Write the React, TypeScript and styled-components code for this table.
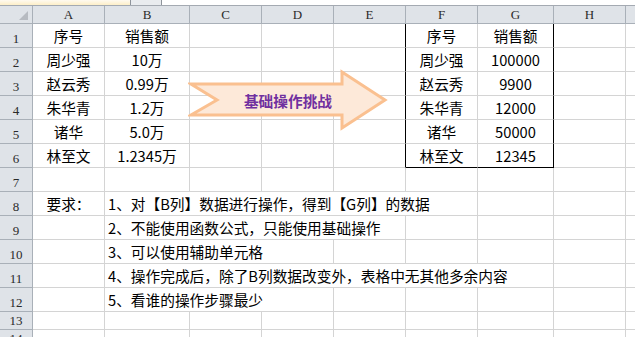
import React from 'react'
import styled, { createGlobalStyle } from 'styled-components'

const GRID = '#d4d4d4'
const HEAD_BG = '#dfe3e8'
const HEAD_LINE = '#a9b0b8'

const COLS = ['A', 'B', 'C', 'D', 'E', 'F', 'G', 'H', 'I']
const WIDTHS = [72, 85, 72, 72, 72, 72, 76, 72, 72]

const Global = createGlobalStyle`
  html, body { margin: 0; padding: 0; background: #fff; overflow: hidden; }
  body { font-family: "Noto Sans CJK SC", "Noto Sans", sans-serif; }
`

const Page = styled.div`
  position: relative;
  width: 635px;
  height: 337px;
  overflow: hidden;
`

// tail of the formula bar above the sheet
const TopStrip = styled.div`
  display: flex;
  height: 5px;
  border-bottom: 1px solid #a4aab2;
`
const NameBox = styled.div`
  width: 130px;
  background: linear-gradient(#fffaf0, #fdefc8);
  border-right: 1px solid #8e949b;
`
const FxBox = styled.div`
  width: 30px;
  background: #e9ecef;
  border-right: 1px solid #8e949b;
`

const Sheet = styled.div`
  display: grid;
  grid-template-columns: 33px ${WIDTHS.map((w) => `${w}px`).join(' ')};
  grid-template-rows: 18px repeat(12, 24px) 18px 18px;
  width: max-content;
`

const HeadCell = styled.div<{ $corner?: boolean }>`
  position: relative;
  box-sizing: border-box;
  background: ${HEAD_BG};
  border-right: 1px solid ${HEAD_LINE};
  border-bottom: 1px solid ${HEAD_LINE};
  display: flex;
  align-items: flex-end;
  justify-content: center;
  padding-bottom: 1px;
  font-family: "Liberation Serif", serif;
  font-size: 13px;
  line-height: 15px;
  color: #2a2a2a;
`

const CornerMark = styled.div`
  position: absolute;
  right: 4px;
  bottom: 3px;
  width: 0;
  height: 0;
  border-left: 9px solid transparent;
  border-bottom: 9px solid #b7bbc1;
`

const Cell = styled.div<{ $align?: 'left' | 'center'; $right?: string; $bottom?: string; $span?: number }>`
  box-sizing: border-box;
  grid-column: ${(p) => (p.$span ? `span ${p.$span}` : 'auto')};
  border-right: 1px solid ${(p) => p.$right || GRID};
  border-bottom: 1px solid ${(p) => p.$bottom || GRID};
  display: flex;
  align-items: flex-end;
  justify-content: ${(p) => (p.$align === 'left' ? 'flex-start' : 'center')};
  padding: 0 0 2px ${(p) => (p.$align === 'left' ? '3px' : '0')};
  font-size: 14.7px;
  line-height: 18px;
  color: #000;
  white-space: nowrap;
  overflow: visible;
`

const ArrowBadge = styled.div`
  position: absolute;
  left: 188px;
  top: 69px;
  width: 200px;
  height: 62px;
`
const ArrowLabel = styled.div`
  position: absolute;
  inset: 0;
  display: flex;
  align-items: center;
  justify-content: center;
  font-size: 14.7px;
  font-weight: 700;
  color: #7030a0;
  letter-spacing: 0;
`

const names = ['序号', '周少强', '赵云秀', '朱华青', '诸华', '林至文']
const sales = ['销售额', '10万', '0.99万', '1.2万', '5.0万', '1.2345万']
const converted = ['销售额', '100000', '9900', '12000', '50000', '12345']

const rules: Record<number, { text: string; span: number }> = {
  8: { text: '1、对【B列】数据进行操作，得到【G列】的数据', span: 5 },
  9: { text: '2、不能使用函数公式，只能使用基础操作', span: 4 },
  10: { text: '3、可以使用辅助单元格', span: 3 },
  11: { text: '4、操作完成后，除了B列数据改变外，表格中无其他多余内容', span: 6 },
  12: { text: '5、看谁的操作步骤最少', span: 3 },
}

const renderRow = (r: number) => {
  const cells: React.ReactNode[] = [<HeadCell key="h">{r}</HeadCell>]
  const inBox = r >= 1 && r <= 6
  let c = 0
  while (c < COLS.length) {
    const col = COLS[c]
    const rule = rules[r]
    if (col === 'B' && rule) {
      cells.push(
        <Cell key={col} $align="left" $span={rule.span}>
          {rule.text}
        </Cell>,
      )
      c += rule.span
      continue
    }
    let text: React.ReactNode = null
    if (inBox && (col === 'A' || col === 'F')) text = names[r - 1]
    if (inBox && col === 'B') text = sales[r - 1]
    if (inBox && col === 'G') text = converted[r - 1]
    if (r === 8 && col === 'A') text = '要求：'
    const right = inBox && (col === 'E' || col === 'G') ? '#000' : undefined
    const bottom = r === 6 && (col === 'F' || col === 'G') ? '#000' : undefined
    cells.push(
      <Cell key={col} $right={right} $bottom={bottom}>
        {text}
      </Cell>,
    )
    c++
  }
  return cells
}

export default function App() {
  return (
    <Page>
      <Global />
      <TopStrip>
        <NameBox />
        <FxBox />
      </TopStrip>
      <Sheet>
        <HeadCell>
          <CornerMark />
        </HeadCell>
        {COLS.map((c) => (
          <HeadCell key={c}>{c}</HeadCell>
        ))}
        {Array.from({ length: 14 }, (_, i) => renderRow(i + 1))}
      </Sheet>
      <ArrowBadge>
        <svg width="200" height="62" viewBox="0 0 200 62">
          <polygon
            points="3,15 154,15 154,3 197,31 154,59 154,46 3,46 29,31"
            fill="#fde9d9"
            stroke="#fac090"
            strokeWidth="3"
            strokeLinejoin="miter"
          />
        </svg>
        <ArrowLabel>基础操作挑战</ArrowLabel>
      </ArrowBadge>
    </Page>
  )
}
